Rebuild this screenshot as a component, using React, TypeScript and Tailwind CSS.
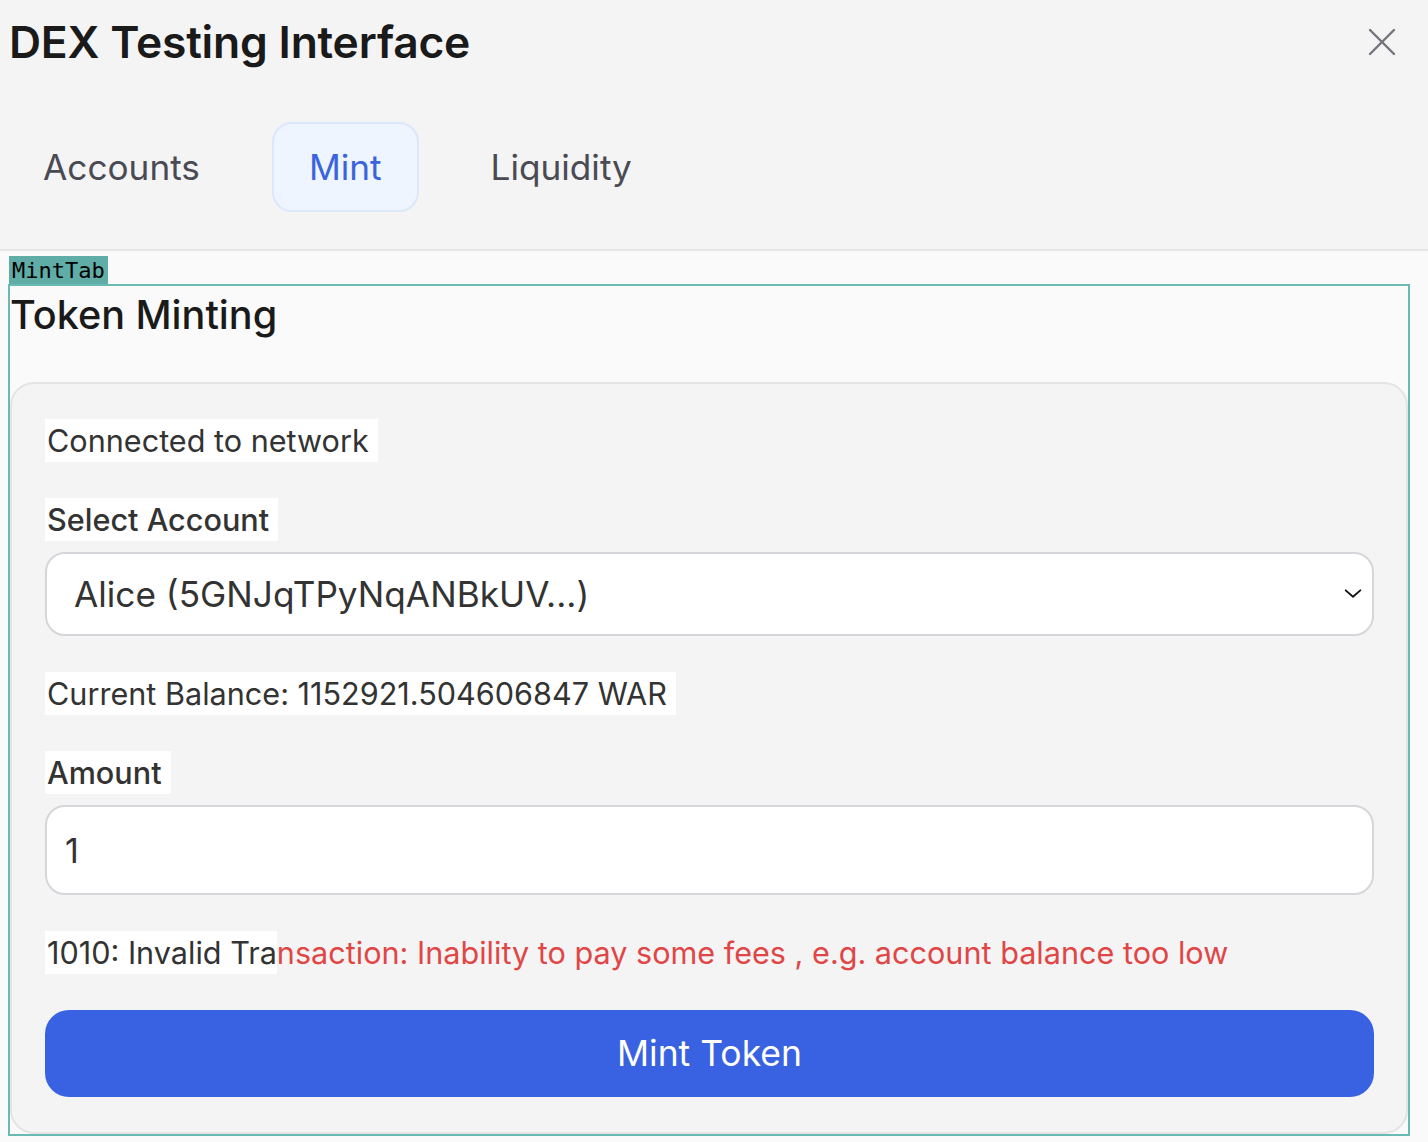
import React from "react";

export default function App() {
  return (
    <div className="min-h-screen bg-[#fafafa] font-['Inter',sans-serif] text-[#1a1a1a]">
      {/* Header */}
      <div className="bg-[#f4f4f4] border-b-2 border-[#e6e6e6] h-[251px]">
        <div className="flex items-start justify-between pl-[9px] pr-[22px]">
          <h1 className="mt-[20px] text-[44.4px] leading-[44px] font-semibold tracking-[-0.2px] text-[#1a1a1a]">
            DEX Testing Interface
          </h1>
          <button className="mt-[18px] text-[#74747c]">
            <svg width="48" height="48" viewBox="0 0 48 48" fill="none" stroke="currentColor" strokeWidth="2.4" strokeLinecap="round">
              <path d="M12 12 L36 36" />
              <path d="M36 12 L12 36" />
            </svg>
          </button>
        </div>
        <div className="mt-[56px] flex gap-[35px] pl-[6px]">
          <button className="h-[90px] px-[35px] rounded-[20px] border-2 border-transparent text-[35.2px] text-[#4a4a55]">
            Accounts
          </button>
          <button className="h-[90px] px-[35px] rounded-[20px] border-2 border-[#dbe7fb] bg-[#eef5fe] text-[35.2px] text-[#3a63e0]">
            Mint
          </button>
          <button className="h-[90px] px-[35px] rounded-[20px] border-2 border-transparent text-[35.2px] text-[#4a4a55]">
            Liquidity
          </button>
        </div>
      </div>

      {/* Content */}
      <div className="pt-[5px] pl-[10px] pr-[20px]">
        <div className="-ml-[1px] inline-block bg-[#5fada6] px-[3px] h-[29px] leading-[29px] text-[22px] font-['DejaVu_Sans_Mono',monospace] text-black">
          MintTab
        </div>
        <div className="mt-[1px] outline-2 outline-[#6bbab2]">
          <h2 className="pt-[4px] text-[39.6px] leading-[50px] font-medium text-[#1a1a1a]">
            Token Minting
          </h2>
          <div className="mt-[42px] rounded-[24px] border-2 border-[#e4e4e4] bg-[#f4f4f4] pl-[33px] pr-[32px] pt-[35px] pb-[35px]">
            <div className="flex flex-col gap-[36px]">
              <div>
                <span className="inline-block bg-white pr-[9px] pl-[2px] h-[43px] leading-[43px] text-[30.6px] text-[#333]">
                  Connected to network
                </span>
              </div>
              <div className="flex flex-col gap-[11px]">
                <div>
                  <span className="inline-block bg-white pr-[9px] pl-[2px] h-[43px] leading-[43px] text-[30.6px] font-medium text-[#333]">
                    Select Account
                  </span>
                </div>
                <div className="relative h-[84px] rounded-[20px] border-2 border-[#d6d6da] bg-white flex items-center pl-[27px]">
                  <span className="text-[35.2px] text-[#333]">Alice (5GNJqTPyNqANBkUV...)</span>
                  <svg className="absolute right-[8px] top-1/2 -translate-y-1/2" width="22" height="22" viewBox="0 0 24 24" fill="none" stroke="#111" strokeWidth="2" strokeLinecap="round" strokeLinejoin="round">
                    <path d="M4 8 L12 15 L20 8" />
                  </svg>
                </div>
              </div>
              <div>
                <span className="inline-block bg-white pr-[9px] pl-[2px] h-[43px] leading-[43px] text-[30.6px] text-[#333]">
                  Current Balance: 1152921.504606847 WAR
                </span>
              </div>
              <div className="flex flex-col gap-[11px]">
                <div>
                  <span className="inline-block bg-white pr-[9px] pl-[2px] h-[43px] leading-[43px] text-[30.6px] font-medium text-[#333]">
                    Amount
                  </span>
                </div>
                <div className="h-[90px] rounded-[20px] border-2 border-[#d6d6da] bg-white flex items-center pl-[18px]">
                  <span className="text-[34px] text-[#333]">1</span>
                </div>
              </div>
              <div className="h-[43px] leading-[43px] text-[30.6px] whitespace-nowrap">
                <span className="bg-white text-[#333] inline-block h-[43px] pl-[2px]">1010: Invalid Tra</span>
                <span className="text-[#e04646]">nsaction: Inability to pay some fees , e.g. account balance too low</span>
              </div>
              <button className="h-[87px] rounded-[24px] bg-[#3862e2] text-white text-[35.5px]">
                Mint Token
              </button>
            </div>
          </div>
        </div>
      </div>
    </div>
  );
}
